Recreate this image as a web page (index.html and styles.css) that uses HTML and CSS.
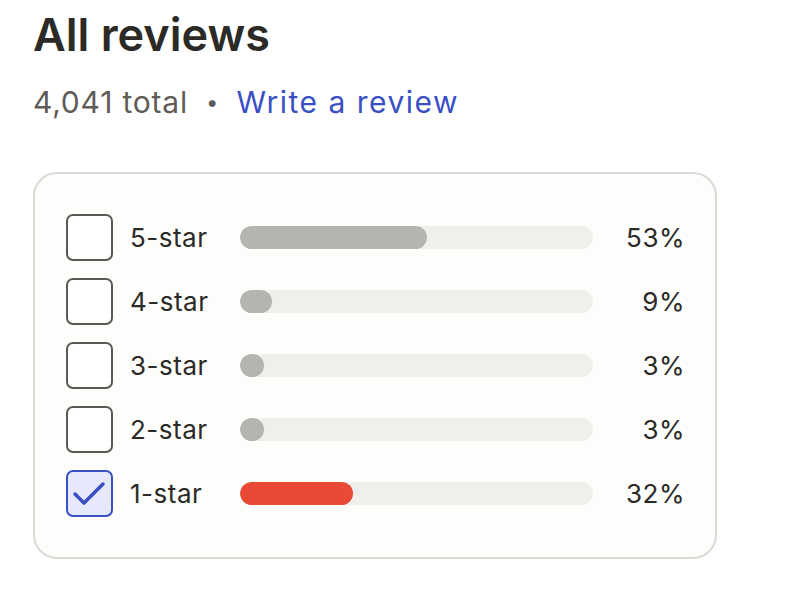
FILE: index.html
```html
<!DOCTYPE html>
<html lang="en">
<head>
    <meta charset="UTF-8">
    <meta name="viewport" content="width=device-width, initial-scale=1.0">
    <title>All reviews</title>
    <link rel="stylesheet" href="styles.css">
</head>
<body>
    <div class="reviews">
        <h2>All reviews</h2>
        <p class="summary">
            <span class="total">4,041 total</span>
            <span class="dot">&bull;</span>
            <a href="#" class="write">Write a review</a>
        </p>

        <div class="card">
            <!-- one row per star rating -->
            <label class="row">
                <span class="box"></span>
                <span class="name">5-star</span>
                <span class="track"><span class="fill" style="width: 53%"></span></span>
                <span class="pct">53%</span>
            </label>
            <label class="row">
                <span class="box"></span>
                <span class="name">4-star</span>
                <span class="track"><span class="fill" style="width: 9%"></span></span>
                <span class="pct">9%</span>
            </label>
            <label class="row">
                <span class="box"></span>
                <span class="name">3-star</span>
                <span class="track"><span class="fill" style="width: 3%"></span></span>
                <span class="pct">3%</span>
            </label>
            <label class="row">
                <span class="box"></span>
                <span class="name">2-star</span>
                <span class="track"><span class="fill" style="width: 3%"></span></span>
                <span class="pct">3%</span>
            </label>
            <label class="row checked">
                <span class="box">
                    <svg width="47" height="47" viewBox="0 0 47 47">
                        <path d="M9 24 L18 33 L37 14" fill="none" stroke="#3b4fc4" stroke-width="3.5" stroke-linecap="round" stroke-linejoin="round"/>
                    </svg>
                </span>
                <span class="name">1-star</span>
                <span class="track"><span class="fill" style="width: 32%"></span></span>
                <span class="pct">32%</span>
            </label>
        </div>
    </div>
</body>
</html>
```

FILE: styles.css
```css
body {
    font-family: Inter, "Liberation Sans", sans-serif;
    background-color: #fff;
    color: #2b2a26;
    margin: 0;
}
.reviews {
    padding: 0 33px;
}
h2 {
    margin: 0;
    padding-top: 9px;
    font-size: 45px;
    font-weight: 600;
    letter-spacing: 0;
    line-height: 52px;
}
.summary {
    margin: 24px 0 0;
    font-size: 30px;
    line-height: 34px;
    display: flex;
    align-items: center;
}
.total {
    color: #5f5b56;
    letter-spacing: 0.8px;
}
.dot {
    color: #5f5b56;
    font-size: 22px;
    margin: 0 18px 0 18px;
}
.write {
    color: #3b4fc4;
    text-decoration: none;
    letter-spacing: 1.5px;
}
.card {
    margin-top: 53px;
    box-sizing: border-box;
    width: 684px;
    padding: 40px 30px 40px 31px;
    background-color: #fdfdfc;
    border: 2px solid #dcd9d5;
    border-radius: 24px;
    display: flex;
    flex-direction: column;
    gap: 17px;
}
.row {
    display: flex;
    align-items: center;
    height: 47px;
}
.box {
    width: 47px;
    height: 47px;
    box-sizing: border-box;
    border: 2px solid #5c5955;
    border-radius: 7px;
    background-color: #fff;
    flex-shrink: 0;
    position: relative;
}
.box svg {
    position: absolute;
    left: -2px;
    top: -2px;
}
.checked .box {
    border-color: #3b4fc4;
    background-color: #e5e9fb;
}
.name {
    width: 127px;
    padding-left: 17px;
    box-sizing: border-box;
    font-size: 26px;
    letter-spacing: 0.5px;
    color: #2b2a26;
}
.track {
    flex: 1;
    height: 23px;
    border-radius: 12px;
    background-color: #f1efec;
    overflow: hidden;
}
.fill {
    display: block;
    height: 100%;
    min-width: 24px;
    border-radius: 12px;
    background-color: #b5b4b1;
}
.checked .fill {
    background-color: #e84a35;
}
.pct {
    width: 92px;
    text-align: right;
    font-size: 26px;
    letter-spacing: 0.5px;
    color: #2b2a26;
}
```
